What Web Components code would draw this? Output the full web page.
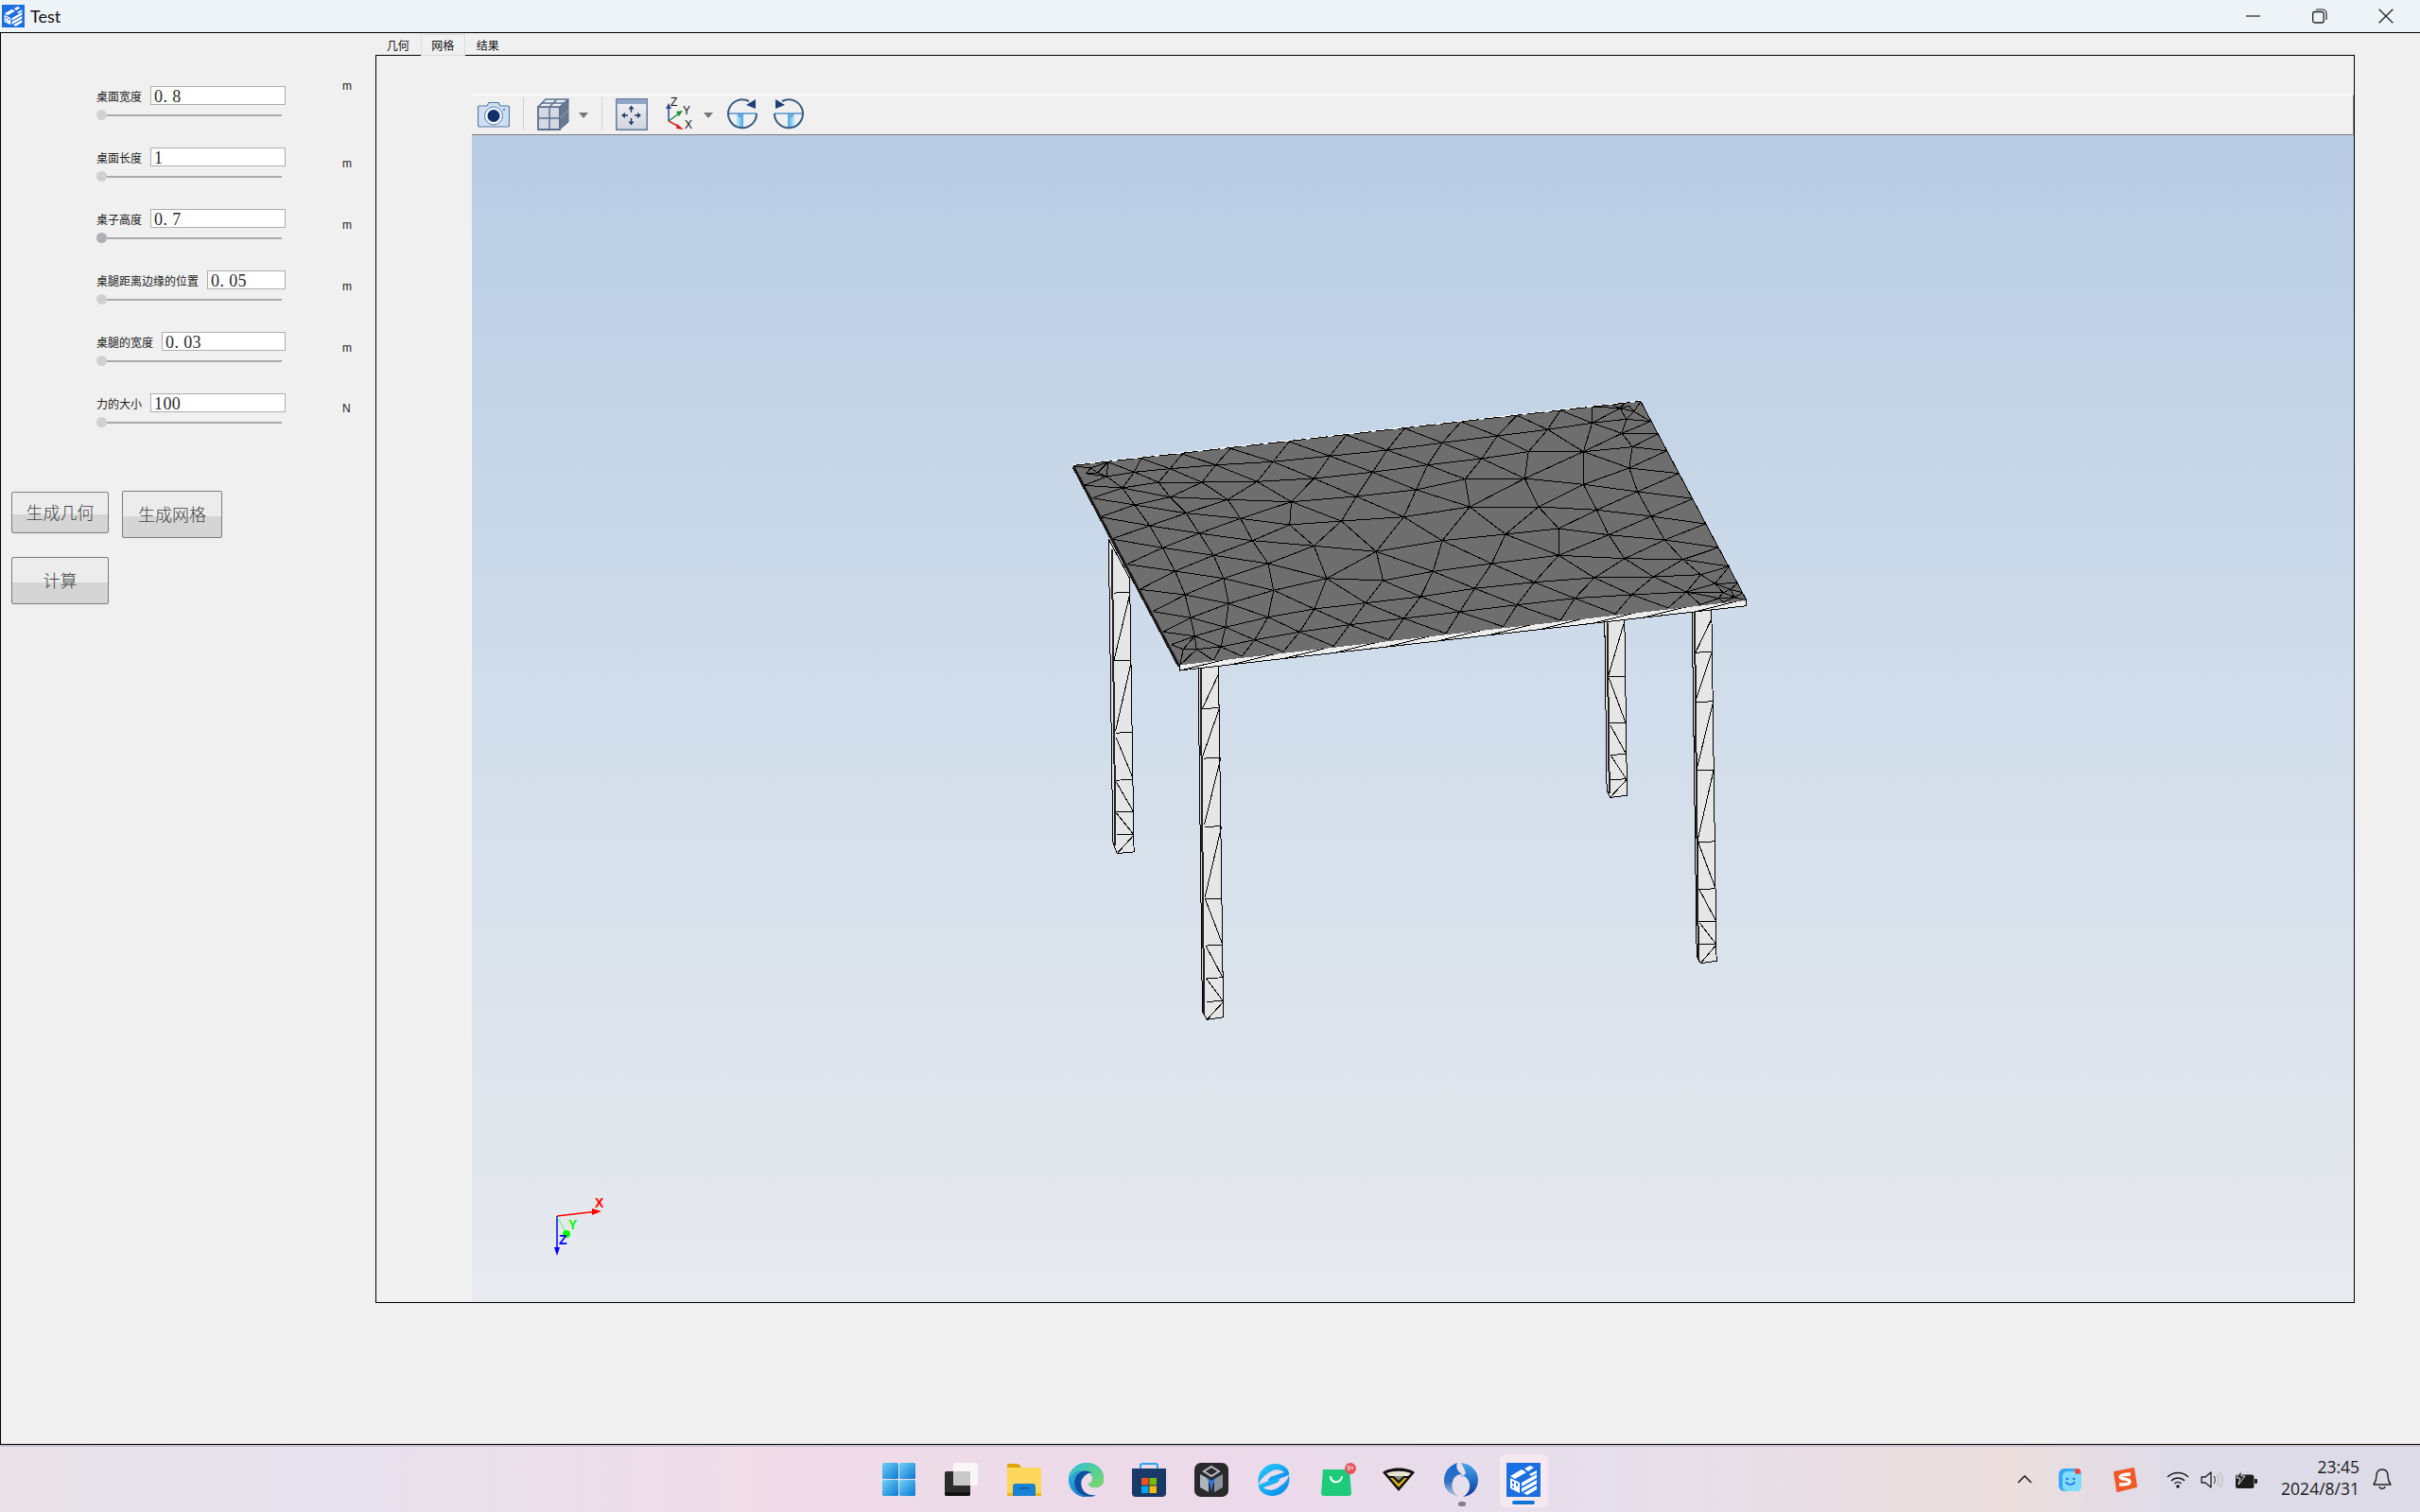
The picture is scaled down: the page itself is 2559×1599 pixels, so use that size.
<!DOCTYPE html>
<html lang="zh">
<head>
<meta charset="utf-8">
<title>Test</title>
<style>
  html, body { margin: 0; padding: 0; }
  body {
    width: 2559px; height: 1599px; overflow: hidden;
    display: flex; flex-direction: column;
    background: #f0f0f0;
    font-family: "Liberation Sans", "Noto Sans CJK SC", sans-serif;
  }
</style>
</head>
<body>
  <win-titlebar>Test</win-titlebar>

  <app-window>
    <param-panel slot="side">
      <param-row label="桌面宽度" value="0. 8" unit="m" unit-top="-10"></param-row>
      <param-row label="桌面长度" value="1" unit="m" unit-top="7"></param-row>
      <param-row label="桌子高度" value="0. 7" unit="m" unit-top="7" active></param-row>
      <param-row label="桌腿距离边缘的位置" value="0. 05" unit="m" unit-top="7"></param-row>
      <param-row label="桌腿的宽度" value="0. 03" unit="m" unit-top="7"></param-row>
      <param-row label="力的大小" value="100" unit="N" unit-top="6"></param-row>
      <div slot="actions" style="display:flex;align-items:flex-start;gap:14px">
        <tool-button w="103" h="44" split="23" style="margin-top:1px">生成几何</tool-button>
        <tool-button w="106" h="50" split="26">生成网格</tool-button>
      </div>
      <tool-button slot="actions" w="103" h="50" split="26">计算</tool-button>
    </param-panel>

    <tab-panel slot="main" tabs="几何,网格,结果" current="1">
      <view-toolbar></view-toolbar>
      <mesh-view></mesh-view>
    </tab-panel>
  </app-window>

  <task-bar></task-bar>

<script>
// ---- icones partagees -------------------------------------------------
const ICONS = {
  logo: `<svg viewBox="0 0 36 36" width="100%" height="100%"><rect width="36" height="36" fill="#1b6fe0"/>
    <g fill="#fff"><path d="M4 14 16 7l5 3-12 7z"/><path d="M19 6l6-3 4 2-6 4z"/>
    <path d="M4 16l10 5v11L4 27z"/><path d="M16 21l16-9v4L16 25z"/><path d="M16 27l16-9v4L16 31z"/><path d="M18 32l14-8v4l-10 6z"/><path d="M24 12l8-4v3l-6 3z"/></g>
    <g fill="#1b6fe0"><path d="M6 19l2 1v3l-2-1z"/><path d="M10 21l2 1v3l-2-1z"/><path d="M6 24l2 1v2l-2-1z"/></g></svg>`,
  win: `<svg viewBox="0 0 35 35" width="35" height="35"><defs><linearGradient id="w" x1="0" y1="0" x2="1" y2="1"><stop offset="0" stop-color="#6fd2f6"/><stop offset="1" stop-color="#0b78d3"/></linearGradient></defs>
    <g fill="url(#w)"><rect width="17" height="17" rx="1.5"/><rect x="18" width="17" height="17" rx="1.5"/><rect y="18" width="17" height="17" rx="1.5"/><rect x="18" y="18" width="17" height="17" rx="1.5"/></g></svg>`,
  task: `<svg viewBox="0 0 36 36" width="36" height="36"><rect x="0" y="9" width="27" height="26" rx="2" fill="#2d2d2d"/><rect x="0" y="31" width="27" height="4" rx="2" fill="#111"/>
    <rect x="9" y="0" width="26" height="24" rx="2" fill="#fafafa" fill-opacity=".85"/><rect x="9" y="9" width="18" height="15" fill="#c9c9c9"/></svg>`,
  folder: `<svg viewBox="0 0 36 34" width="36" height="34"><path d="M0 2a2 2 0 0 1 2-2h10l3 4h-15z" fill="#e0a408"/><path d="M0 4h34a2 2 0 0 1 2 2v28H0z" fill="#ffd75c"/><path d="M0 31h36v3H0z" fill="#f4b50e"/>
    <path d="M6 34V24a3 3 0 0 1 3-3h18a3 3 0 0 1 3 3v10z" fill="#1a82d0"/><rect x="13" y="25" width="10" height="1.6" fill="#0b5ea6"/></svg>`,
  edge: `<svg viewBox="0 0 38 36" width="38" height="36"><defs><linearGradient id="e1" x1="0" y1="0" x2=".9" y2="1"><stop offset="0" stop-color="#33c6dc"/><stop offset=".6" stop-color="#1b86d4"/><stop offset="1" stop-color="#0f5fb2"/></linearGradient><linearGradient id="e2" x1="0" y1="0" x2="1" y2="1"><stop offset="0" stop-color="#2dc0d8"/><stop offset="1" stop-color="#7edb5e"/></linearGradient></defs>
    <path d="M19 0C30 0 38 8 37 18c0 5-4 8-9 8-4 0-7-2-7-4 3-1 5-3 4-7C23 9 17 7 12 10 5 14 4 25 10 31c5 5 13 6 19 3-6 4-15 3-21-1C2 29-1 22 0 15 2 6 10 0 19 0z" fill="url(#e1)"/>
    <path d="M19 0C30 0 38 8 37 18c0 5-4 8-9 8-4 0-7-2-7-4 3-1 5-3 4-7-1-4-6-7-11-7C8 8 3 12 1 17 2 7 10 0 19 0z" fill="url(#e2)"/>
    <path d="M12 10C5 14 4 25 10 31c5 5 13 6 19 3-7 1-13-2-15-8-2-6 0-10 4-13 2-2 5-3 7-2-4-3-9-3-13-1z" fill="#0c4f9e"/></svg>`,
  store: `<svg viewBox="0 0 36 36" width="36" height="36"><path d="M9 8V3a2 2 0 0 1 2-2h14a2 2 0 0 1 2 2v5" fill="none" stroke="#2ba5e8" stroke-width="2"/>
    <path d="M0 6h36v26a4 4 0 0 1-4 4H4a4 4 0 0 1-4-4z" fill="#183a69"/><rect x="10" y="16" width="7.5" height="7.5" fill="#f25022"/><rect x="18.5" y="16" width="7.5" height="7.5" fill="#7fba00"/><rect x="10" y="24.5" width="7.5" height="7.5" fill="#00a4ef"/><rect x="18.5" y="24.5" width="7.5" height="7.5" fill="#ffb900"/></svg>`,
  hub: `<svg viewBox="0 0 36 36" width="36" height="36"><rect width="36" height="36" rx="7" fill="#2a2a2c"/><path d="M18 4l8 5-8 5-8-5z" fill="none" stroke="#b9bec6" stroke-width="2"/><path d="M6 12l9 5v14l-9-5z" fill="#aeb4bd"/><path d="M30 12l-9 5v14l9-5z" fill="#8d939c"/><path d="M12 15l6 4 6-4-4 6-2 9-2-9z" fill="#2f7be8"/></svg>`,
  swirl: `<svg viewBox="0 0 34 34" width="34" height="34"><defs><linearGradient id="s" x1="0" y1="0" x2="1" y2="1"><stop offset="0" stop-color="#25d2fa"/><stop offset="1" stop-color="#0a7fe6"/></linearGradient></defs>
    <path d="M20 0c9 1 14 7 13 12L11 20c-1-3 1-6 5-7l12-4c-3-3-9-4-14-1C7 12 2 17 1 22-2 10 8-1 20 0z" fill="url(#s)"/><path d="M14 34C5 33 0 27 1 22l22-8c1 3-1 6-5 7L6 25c3 3 9 4 14 1 7-4 12-9 13-14 3 12-7 23-19 22z" fill="url(#s)"/></svg>`,
  bag: `<svg viewBox="0 0 32 31" width="32" height="31"><path d="M2 3h28l2 25c0 2-1 3-3 3H3c-2 0-3-1-3-3z" fill="#1fcb7b"/><path d="M10 11c1 7 10 7 12 0" fill="none" stroke="#fff" stroke-width="2" stroke-linecap="round"/></svg>`,
  shield: `<svg viewBox="0 0 34 25" width="34" height="25"><path d="M0 5C8-1 26-1 34 5L17 25z" fill="#111"/><path d="M4 6c8-3 18-3 26 0l-3 3H7z" fill="#e8e4d4"/><path d="M8 11l9 10 9-10-3 0-6 6-6-6z" fill="#d9b21c"/><path d="M12 9l5 5 5-5z" fill="#8d8d80"/></svg>`,
  orbit: `<svg viewBox="0 0 36 36" width="36" height="36"><defs><linearGradient id="oL" x1="0" y1="0" x2="0" y2="1"><stop offset="0" stop-color="#1668d0"/><stop offset=".55" stop-color="#2f6fc4"/><stop offset="1" stop-color="#c3ccd6"/></linearGradient><linearGradient id="oR" x1="0" y1="0" x2="0" y2="1"><stop offset="0" stop-color="#45a8ea"/><stop offset="1" stop-color="#0a389f"/></linearGradient></defs>
    <path d="M14 0C5 3 0 10 0 19c0 9 6 15 16 17-6-4-9-10-7-16 1-5 5-8 10-8-5-3-7-8-5-12z" fill="url(#oL)"/>
    <path d="M18 0c10 1 18 8 18 18 0 10-7 17-16 18 5-3 8-8 7-14-1-5-5-8-10-8 5-1 7-2 5-6-1-3-3-6-4-8z" fill="url(#oR)"/>
    <path d="M17 13c5 0 9 4 9 9 0 5-4 8-8 8-4-2-5-7-3-10 2 4 7 3 7-1 0-3-3-6-5-6z" fill="#dfe5ec"/></svg>`,
  chevron: `<svg viewBox="0 0 16 9" width="16" height="9"><path d="M1 8l7-7 7 7" fill="none" stroke="#222" stroke-width="1.6"/></svg>`,
  smile: `<svg viewBox="0 0 24 24" width="24" height="24"><rect width="24" height="24" rx="6" fill="#36a6f7"/><rect x="4" y="3" width="20" height="21" rx="5" fill="#7fdcfa"/><circle cx="9" cy="11" r="1.3" fill="#1e6fe8"/><circle cx="16" cy="11" r="1.3" fill="#1e6fe8"/><path d="M7.5 14c1.500 4 8 4 9.500 0" fill="none" stroke="#1e6fe8" stroke-width="1.600"/><circle cx="20" cy="3" r="3" fill="#f2453d"/></svg>`,
  sogou: `<svg viewBox="0 0 26 26" width="26" height="26"><path d="M2 5l20-4 3 19-20 5z" fill="#f0582a" stroke="#f0582a" stroke-linejoin="round" stroke-width="2"/><path d="M19 7c-4 0-10 0-11 3 0 3 10 1 10 5 0 3-6 3-11 3" fill="none" stroke="#fff" stroke-width="3.400"/></svg>`,
  wifi: `<svg viewBox="0 0 24 18" width="24" height="18"><g fill="none" stroke="#1c1c1c" stroke-width="1.500"><path d="M1 6c6-6 16-6 22 0"/><path d="M5 10c4-4 10-4 14 0"/><path d="M8.500 13c2-2 5-2 7 0"/></g><circle cx="12" cy="16" r="1.800" fill="#1c1c1c"/></svg>`,
  volume: `<svg viewBox="0 0 24 20" width="24" height="20"><path d="M1 7h4l6-5v16l-6-5H1z" fill="none" stroke="#1c1c1c" stroke-width="1.300" stroke-linejoin="round"/><path d="M14 6c2 2 2 6 0 8" fill="none" stroke="#555" stroke-width="1.200"/><path d="M17 4c3 3 3 9 0 12M20 2c4 4 4 12 0 16" fill="none" stroke="#b8b8c0" stroke-width="1.200"/></svg>`,
  battery: `<svg viewBox="0 0 24 20" width="24" height="20"><rect x="1" y="4.500" width="19.500" height="14.500" rx="2.500" fill="#1c1c1c"/><rect x="21" y="9" width="3" height="5" rx="1" fill="#1c1c1c"/><path d="M7 0L2 8h4l-2 7 7-9H7z" fill="#1c1c1c" stroke="#e4e0ea" stroke-width="1"/></svg>`,
  bell: `<svg viewBox="0 0 20 23" width="20" height="23"><path d="M10 1c-4 0-6 3-6 7 0 4-1 6-3 9h18c-2-3-3-5-3-9 0-4-2-7-6-7zM7 19c.5 3 5.500 3 6 0" fill="none" stroke="#222" stroke-width="1.400" stroke-linejoin="round"/></svg>`
};

// ---- barre de titre ---------------------------------------------------
class WinTitlebar extends HTMLElement {
  connectedCallback() {
    this.attachShadow({ mode: 'open' }).innerHTML = `
      <style>
        :host { display: flex; align-items: center; height: 34px; flex: none; background: #eef3f8; color: #111;
                font: 18px Lato, "Open Sans", sans-serif; }
        .logo { width: 24px; height: 24px; margin: 0 6px 0 2px; }
        .fill { flex: 1; }
        .ctl { width: 70px; height: 34px; display: flex; align-items: center; justify-content: center; }
        .ctl:last-child { margin-right: 1px; }
      </style>
      <div class="logo">${ICONS.logo}</div><slot></slot><div class="fill"></div>
      <div class="ctl"><svg width="16" height="16"><path d="M0 8h15" stroke="#222" stroke-width="1.200"/></svg></div>
      <div class="ctl"><svg width="16" height="16"><rect x=".7" y="3.500" width="11.500" height="11.500" rx="2" fill="none" stroke="#222" stroke-width="1.300"/><path d="M4 1h7a4 4 0 0 1 4 4v7" fill="none" stroke="#222" stroke-width="1.200"/></svg></div>
      <div class="ctl"><svg width="16" height="16"><path d="M.7.700l14.600 14.600M15.300.700L.7 15.300" stroke="#222" stroke-width="1.300"/></svg></div>`;
  }
}
customElements.define('win-titlebar', WinTitlebar);

// ---- fenetre : colonne de gauche + onglets ----------------------------
class AppWindow extends HTMLElement {
  connectedCallback() {
    this.attachShadow({ mode: 'open' }).innerHTML = `
      <style>
        :host { display: flex; flex: 1; min-height: 0; background: #f0f0f0;
                border-top: 1px solid #000; border-bottom: 1px solid #000; border-left: 1px solid #000; }
        .side { width: 396px; flex: none; }
      </style>
      <div class="side"><slot name="side"></slot></div>
      <div><slot name="main"></slot></div>`;
  }
}
customElements.define('app-window', AppWindow);

class ParamPanel extends HTMLElement {
  connectedCallback() {
    this.attachShadow({ mode: 'open' }).innerHTML = `
      <style>
        :host { display: block; padding-top: 56px; }
        .actions { display: flex; flex-direction: column; gap: 20px; padding: 38px 0 0 11px; }
      </style>
      <slot></slot>
      <div class="actions"><slot name="actions"></slot></div>`;
  }
}
customElements.define('param-panel', ParamPanel);

// Une ligne de parametre : libelle, valeur, curseur, unite
class ParamRow extends HTMLElement {
  connectedCallback() {
    const label = this.getAttribute('label');
    const value = this.getAttribute('value');
    const unit  = this.getAttribute('unit');
    const top   = this.getAttribute('unit-top') || 0;
    const knob  = this.hasAttribute('active') ? '#aeb0b3' : '#d0d0d0';
    this.attachShadow({ mode: 'open' }).innerHTML = `
      <style>
        :host { display: flex; align-items: flex-start; height: 65px; padding-left: 101px; }
        .form { width: 200px; flex: none; }
        .top { display: flex; align-items: center; gap: 9px; height: 20px; }
        label { font: 12px "Noto Sans CJK SC", sans-serif; color: #222; white-space: nowrap; }
        .val { flex: 1; height: 18px; box-sizing: content-box; background: #fff; border: 1px solid #adadad;
               font: 18px/20px "Liberation Serif", serif; letter-spacing: .4px; color: #2a2a2a; padding-left: 3px; white-space: pre; overflow: hidden; }
        .slider { display: flex; align-items: center; height: 11px; margin-top: 5px; width: 196px; }
        .knob { width: 11px; height: 11px; border-radius: 50%; background: ${knob}; flex: none; }
        .track { flex: 1; height: 2px; background: #a9a9a9; }
        .unit { margin: ${top}px 0 0 60px; font: 12px/20px "Liberation Sans", sans-serif; color: #222; }
      </style>
      <div class="form">
        <div class="top"><label>${label}</label><div class="val">${value}</div></div>
        <div class="slider"><div class="knob"></div><div class="track"></div></div>
      </div>
      <div class="unit">${unit}</div>`;
  }
}
customElements.define('param-row', ParamRow);

class ToolButton extends HTMLElement {
  connectedCallback() {
    const w = this.getAttribute('w'), h = this.getAttribute('h'), s = this.getAttribute('split');
    this.attachShadow({ mode: 'open' }).innerHTML = `
      <style>
        :host { display: flex; align-items: center; justify-content: center; box-sizing: border-box;
                width: ${w}px; height: ${h}px; padding-bottom: 3px; border: 1px solid #7c7c7c; border-radius: 2px;
                background: linear-gradient(#ececec ${s}px, #d5d5d5 ${s}px);
                font: 300 18px "Noto Sans CJK SC", sans-serif; color: #444; }
      </style><slot></slot>`;
  }
}
customElements.define('tool-button', ToolButton);

// ---- onglets ----------------------------------------------------------
class TabPanel extends HTMLElement {
  connectedCallback() {
    const tabs = this.getAttribute('tabs').split(',');
    const cur  = +this.getAttribute('current');
    this.attachShadow({ mode: 'open' }).innerHTML = `
      <style>
        :host { display: block; padding-top: 1px; }
        .tabs { display: flex; height: 22px; }
        .tab { position: relative; z-index: 1; width: 47.500px; box-sizing: border-box; height: 23px; text-align: center;
               font: 12px/24px "Noto Sans CJK SC", sans-serif; color: #111; }
        .tab.on { background: #f0f0f0; border: 1px solid #dcdcdc; line-height: 22px; }
        .pane { box-sizing: border-box; width: 2093px; height: 1320px; border: 1px solid #000; background: #f0f0f0;
                padding: 41px 0 0 101px; display: flex; flex-direction: column; }
      </style>
      <div class="tabs">${tabs.map((t, i) => `<div class="tab ${i === cur ? 'on' : ''}">${t}</div>`).join('')}</div>
      <div class="pane"><slot></slot></div>`;
  }
}
customElements.define('tab-panel', TabPanel);

// ---- barre d'outils de la vue 3D --------------------------------------
class ViewToolbar extends HTMLElement {
  connectedCallback() {
    const drop = `<svg width="10" height="6" style="margin-top:2px"><path d="M0 0h10L5 6z" fill="#777"/></svg>`;
    const sep = `<i class="sep"></i>`;
    const rot = flip => `<svg width="33" height="33" viewBox="0 0 33 33" style="${flip ? 'transform:scaleX(-1)' : ''}">
        <defs><linearGradient id="q${flip}" x1="0" x2="1"><stop offset="0" stop-color="#f2fbff"/><stop offset="1" stop-color="#3fa9e2"/></linearGradient></defs>
        <path d="M8 16h9v15c-4 0-7-2-9-5z" fill="url(#q${flip})"/><path d="M12 16v3h3" fill="none" stroke="#4a7fb0"/>
        <path d="M1 16h30" stroke="#2b7cc0" stroke-width="1.200"/>
        <path d="M23 3A15 15 0 1 0 31 16" fill="none" stroke="#3c5a80" stroke-width="2"/>
        <path d="M20 7L30 1v10z" fill="#1e3f78"/></svg>`;
    this.attachShadow({ mode: 'open' }).innerHTML = `
      <style>
        :host { display: flex; align-items: center; flex: none; box-sizing: border-box; height: 43px; padding: 0 0 2px 6px;
                background: #f0f0f0; border-top: 1px solid #fff; border-bottom: 1px solid #7d7d7d; border-right: 1px solid #8a8a8a; }
        .sep { width: 1px; height: 35px; background: #d0d0d0; margin: 0 14px; }
        svg { display: block; flex: none; }
      </style>
      <svg width="34" height="28" viewBox="0 0 34 28"><path d="M2 5h8l2-3.500h10l2 3.500h8a1.500 1.500 0 0 1 1.500 1.500v19A1.500 1.500 0 0 1 32 27H2a1.500 1.500 0 0 1-1.500-1.500v-19A1.500 1.500 0 0 1 2 5z" fill="#cfe0f4" stroke="#56779d" stroke-width="1.200"/><circle cx="17" cy="15.500" r="9.500" fill="#eef5fc" stroke="#5d7da3"/><circle cx="17" cy="15.500" r="6.500" fill="#13306b"/><circle cx="28" cy="9" r="1.200" fill="#6d8cb0"/></svg>
      ${sep}
      <svg width="34" height="34" viewBox="0 0 34 34"><path d="M1 9h23v24H1z" fill="#d3d8e1" stroke="#5b6f8e" stroke-width="1.800"/><path d="M1 9l8-8h24l-9 8z" fill="#eceff4" stroke="#5b6f8e" stroke-width="1.600" stroke-linejoin="round"/><path d="M24 9l9-8v24l-9 8z" fill="#67788f" stroke="#5b6f8e"/><path d="M13 9v24M1 21h23M13 9l8-8M5 5h24" fill="none" stroke="#5b6f8e" stroke-width="1.500"/><path d="M24 21l9-8" stroke="#9aa7b8"/></svg>
      <div style="width:10px;margin-left:10px">${drop}</div>
      ${sep}
      <svg width="34" height="34" viewBox="0 0 34 34"><defs><linearGradient id="f" x1="0" x2="0" y1="0" y2="1"><stop offset="0" stop-color="#f1f3f7"/><stop offset="1" stop-color="#cfd4de"/></linearGradient></defs><rect x=".8" y=".8" width="32.400" height="32.400" fill="url(#f)" stroke="#5a7092" stroke-width="1.400"/><rect x="1" y="1" width="32" height="5" fill="#8fa6c6"/><path d="M16.500 10v5M16.500 21v5M8 18h5M20 18h5" stroke="#2a3c5c" stroke-width="1.400"/><path d="M16.500 7.500l-3 4h6zM16.500 28.500l-3-4h6zM6 18l4-3v6zM27 18l-4-3v6z" fill="#2a3c5c"/></svg>
      <svg width="40" height="36" viewBox="0 0 40 36" style="margin-left:15px;margin-right:-4px;overflow:visible"><path d="M7 25V10" stroke="#27479a" stroke-width="1.500"/><path d="M7 6l-3 6h6z" fill="#27479a"/><path d="M7 25L18 17" stroke="#1f8a3c" stroke-width="1.500"/><path d="M22 14l-7 1 3 5z" fill="#1f8a3c"/><path d="M7 25l11 6" stroke="#d6232a" stroke-width="1.500"/><path d="M23 34l-7-6-1 5z" fill="#d6232a"/><text x="9" y="9" font-size="12" font-family="Liberation Sans" fill="#111">Z</text><text x="22" y="18" font-size="12" font-family="Liberation Sans" fill="#111">Y</text><text x="24" y="33" font-size="12" font-family="Liberation Sans" fill="#111">X</text></svg>
      <div style="width:10px;margin-left:8px">${drop}</div>
      <div style="margin-left:15px">${rot(0)}</div>
      <div style="margin-left:15px">${rot(1)}</div>`;
  }
}
customElements.define('view-toolbar', ViewToolbar);

// ---- maillage du plateau : sommets releves, triangulation de Delaunay ----
const TOP_NODES = [
  // contour
  [72,248],[1310,44],[1541,675],[305,880],
  [148,236],[220,224],[310,210],[415,193],[543,171],[668,150],[795,129],[918,108],[1040,88],[1135,72],[1204,60],[1245,53],[1275,49],
  [1331,107],[1347,147],[1367,200],[1393,272],[1424,352],[1451,432],[1480,507],[1503,567],[1522,620],[1533,650],
  [84,282],[96,310],[114,350],[131,410],[155,480],[189,560],[217,640],[246,710],[268,775],[286,815],
  [378,865],[440,852],[530,838],[640,820],[760,800],[885,780],[1010,758],[1135,738],[1255,718],[1370,698],[1440,688],[1490,680],
  // interieur
  [205,268],[283,257],[383,245],[508,235],[632,217],[757,198],[877,175],[997,153],[1107,133],[1204,112],[1269,145],[1292,188],
  [145,282],[258,300],[353,300],[473,298],[597,288],[725,268],[845,245],[963,225],[1065,203],[1185,203],[1285,255],
  [179,318],[283,347],[409,355],[548,362],[690,345],[820,324],[927,290],[1057,288],[1185,307],[1303,330],
  [206,372],[318,398],[437,415],[544,435],[657,423],[793,410],[937,378],[1087,378],[1214,388],[1333,408],
  [239,438],[347,462],[463,485],[597,502],[733,520],[877,485],[1015,465],[1131,447],[1240,467],[1362,483],
  [267,508],[378,532],[497,558],[625,605],[748,612],[857,583],[985,558],[1131,532],[1275,542],[1402,545],
  [294,582],[400,605],[509,643],[830,663],[948,637],[1078,617],[1209,603],[1338,600],[1441,593],
  [316,657],[411,685],[598,702],[710,683],[1040,689],[1166,668],[1290,657],[1410,648],
  [328,730],[404,760],[497,728],[675,752],[793,732],[915,711],
  [337,788],[468,800],[566,775],[394,822],[341,830],[312,830],
  // petits groupes dans les coins
  [110,255],[125,270],[100,272],
  [1265,65],[1285,58],[1295,75],[1279,100],
  [1472,622],[1490,650],[1505,640],[1480,668],[1515,665]
];

function delaunay(pts) {
  const all = pts.concat([[-50, -50], [50, -50], [0, 50]]);
  const n = pts.length;
  let tris = [[n, n + 1, n + 2]];
  const inCircle = (t, p) => {
    const [ax, ay] = all[t[0]], [bx, by] = all[t[1]], [cx, cy] = all[t[2]];
    const d = 2 * (ax * (by - cy) + bx * (cy - ay) + cx * (ay - by));
    const ux = ((ax*ax + ay*ay) * (by - cy) + (bx*bx + by*by) * (cy - ay) + (cx*cx + cy*cy) * (ay - by)) / d;
    const uy = ((ax*ax + ay*ay) * (cx - bx) + (bx*bx + by*by) * (ax - cx) + (cx*cx + cy*cy) * (bx - ax)) / d;
    return (p[0]-ux)**2 + (p[1]-uy)**2 < (ax-ux)**2 + (ay-uy)**2;
  };
  pts.forEach((p, i) => {
    const bad = tris.filter(t => inCircle(t, p));
    const count = {};
    bad.forEach(t => [[t[0],t[1]],[t[1],t[2]],[t[2],t[0]]].forEach(([a, b]) => {
      const k = a < b ? a + '_' + b : b + '_' + a;
      count[k] = (count[k] || 0) + 1;
    }));
    tris = tris.filter(t => !bad.includes(t));
    Object.keys(count).filter(k => count[k] === 1).forEach(k => {
      const [a, b] = k.split('_').map(Number);
      tris.push([a, b, i]);
    });
  });
  const edges = new Set();
  tris.filter(t => t.every(v => v < n)).forEach(t =>
    [[t[0],t[1]],[t[1],t[2]],[t[2],t[0]]].forEach(([a, b]) => edges.add(a < b ? a + '_' + b : b + '_' + a)));
  return [...edges].map(k => k.split('_').map(Number));
}

// Pieds : contour + traverses + diagonales, en coordonnees du releve
const LEGS = [
  { out: [[50,30],[100,150],[110,990],[70,995],[60,960]], inner: [[58,60],[66,970]],
    h: [[62,195,102],[63,403,103],[66,625,105],[66,770,108],[68,868,108],[70,938,110]],
    d: [[100,200,63,400],[103,410,66,620],[68,640,108,765],[68,775,108,865],[68,870,110,938],[110,938,70,995]] },
  { out: [[262,420],[310,415],[322,1498],[283,1505],[272,1480]], inner: [[268,425],[276,1490]],
    h: [[272,550,312],[275,703,315],[277,913,317],[279,1135,319],[280,1278,320],[282,1378,322],[282,1450,322]],
    d: [[310,445,272,550],[312,550,273,695],[315,703,277,905],[317,913,278,1130],[279,1135,320,1275],[281,1280,320,1375],[282,1380,322,1450],[322,1450,283,1505]] },
  { out: [[1225,280],[1272,270],[1278,817],[1238,823],[1230,800]], inner: [[1231,282],[1236,810]],
    h: [[1235,453,1274],[1237,595,1276],[1238,692,1277],[1238,768,1277]],
    d: [[1270,290,1233,453],[1235,455,1275,595],[1238,600,1277,692],[1240,695,1277,768],[1277,768,1238,823]] },
  { out: [[1432,250],[1478,245],[1490,1325],[1452,1332],[1443,1310]], inner: [[1438,252],[1447,1320]],
    h: [[1440,378,1478],[1441,530,1480],[1443,740,1483],[1445,960,1485],[1447,1105,1487],[1448,1205,1488],[1450,1275,1490]],
    d: [[1478,275,1440,378],[1478,380,1442,520],[1482,530,1443,735],[1483,740,1445,955],[1447,962,1487,1100],[1449,1105,1488,1200],[1450,1208,1490,1275],[1490,1275,1452,1332]] }
];

class MeshView extends HTMLElement {
  connectedCallback() {
    const z4 = (X, Y) => [1100 + X * 0.4847, 410 + Y / 3];
    const z5 = (X, Y) => [1150 + X * 0.4464, 560 + Y / 2.904];
    const line = (a, b, w = 1, c = '#000') => `<path d="M${a[0].toFixed(1)} ${a[1].toFixed(1)}L${b[0].toFixed(1)} ${b[1].toFixed(1)}" stroke="${c}" stroke-width="${w}"/>`;
    const poly = p => p.map(q => q[0].toFixed(1) + ',' + q[1].toFixed(1)).join(' ');

    // pieds
    let legs = '';
    LEGS.forEach(l => {
      const o = l.out.map(p => z5(p[0], p[1]));
      legs += `<polygon points="${poly(o)}" fill="#e6e6e6" stroke="#000"/>`;
      legs += line(z5(...l.inner[0]), z5(...l.inner[1]), 2, '#222');
      l.h.forEach(h => legs += line(z5(h[0], h[1]), z5(h[2], h[1] - 2)));
      l.d.forEach(d => legs += line(z5(d[0], d[1]), z5(d[2], d[3])));
    });

    // plateau : on triangule dans le plan de la table (1 x 0.8)
    const A = [72, 248], e1 = [1238, -204], e2 = [233, 632];
    const det = e1[0] * e2[1] - e1[1] * e2[0];
    const plane = TOP_NODES.map(([x, y]) => {
      const dx = x - A[0], dy = y - A[1];
      return [(dx * e2[1] - dy * e2[0]) / det, 0.8 * (e1[0] * dy - e1[1] * dx) / det];
    });
    // une arete dont les deux bouts sont sur le meme bord ferait une lame : on l'ignore
    const sides = p => [p[1] < .012, p[1] > .788, p[0] < .015, p[0] > .985];
    const onSameSide = (a, b) => { const s = sides(a), t = sides(b); return s.some((v, i) => v && t[i]); };
    let wire = '';
    delaunay(plane).forEach(([a, b]) => {
      if (!onSameSide(plane[a], plane[b])) wire += line(z4(...TOP_NODES[a]), z4(...TOP_NODES[b]));
    });

    const top = [[72,248],[1310,44],[1541,675],[305,880]].map(p => z4(p[0], p[1]));
    // la tranche avant, plus large que sur le releve initial pour laisser voir le blanc
    const strip = [[305,876],[1541,670],[1541,692],[305,897]].map(p => z4(p[0], p[1]));
    let zig = '';
    const ZIG = 11;
    for (let i = 0; i < ZIG; i++) {
      const up = X => [X, 876 - (X - 305) * 0.1668], lo = X => [X, 897 - (X - 305) * 0.1658];
      const X0 = 305 + 1236 * i / ZIG, X1 = 305 + 1236 * (i + 1) / ZIG;
      zig += line(z4(...up(X1)), z4(...lo(X0)));
    }

    this.attachShadow({ mode: 'open' }).innerHTML = `
      <style>
        :host { display: block; flex: 1; position: relative; overflow: hidden;
                background: linear-gradient(#b8cce4, #cfdcea 45%, #e8eaee); }
        svg { position: absolute; left: 0; top: 0; }
        text { font-family: "Liberation Sans", sans-serif; font-weight: bold; font-size: 14px; }
      </style>
      <svg width="1989" height="1234" viewBox="499 143 1989 1234" shape-rendering="crispEdges">
        ${legs}
        <polygon points="${poly(strip)}" fill="#eeeeee" stroke="#000"/>
        ${zig}
        <polygon points="${poly(top)}" fill="#6e6e6e"/>
        ${wire}
        ${line(z4(72,245), z4(1310,41), 1, '#fff')}
        <path d="M${z4(72,247).join(' ')}L${z4(1310,43).join(' ')}" stroke="#000" stroke-width="1" stroke-dasharray="18 5"/>
        ${line(z4(72,250), z4(303,884), 3, '#1a1a1a')}
        ${line(z4(1310,44), z4(1541,675), 1)}
      </svg>
      <svg width="1989" height="1234" viewBox="499 143 1989 1234">
        <path d="M589 1286L632 1281" stroke="#f00" stroke-width="1.500"/>
        <path d="M626 1278l10 3-10 4z" fill="#f00"/>
        <path d="M589 1286v38" stroke="#00f" stroke-width="1.500"/>
        <path d="M586 1319h6l-3 9z" fill="#00f"/>
        <path d="M589 1287l10 17" stroke="#0f0" stroke-width="1" stroke-dasharray="2 1"/>
        <circle cx="599" cy="1305" r="4" fill="#0f0"/>
        <text x="629" y="1277" fill="#f00">X</text>
        <text x="601" y="1300" fill="#0f0">Y</text>
        <text x="591" y="1316" fill="#00f">Z</text>
      </svg>`;
  }
}
customElements.define('mesh-view', MeshView);

// ---- barre des taches -------------------------------------------------
class TaskBar extends HTMLElement {
  connectedCallback() {
    const apps = ['win','task','folder','edge','store','hub','swirl','bag','shield','orbit'];
    const cell = a => `<div class="cell">${a === 'bag' ? `<div class="bag">${ICONS.bag}<span class="badge">9+</span></div>` : ICONS[a]}${a === 'orbit' ? '<i class="dot"></i>' : ''}</div>`;
    this.attachShadow({ mode: 'open' }).innerHTML = `
      <style>
        :host { display: block; position: relative; flex: none; height: 71px; box-sizing: border-box; border-top: 2px solid #c8c0cc;
                background: linear-gradient(90deg, #e9e3e8 0, #e6e2ee 340px, #f0dde8 800px, #ecd9e9 1280px, #e6dfec 1700px, #ecdedd 2130px, #dedbe9 2300px, #dcdbe6 2559px);
                font-family: "Open Sans", "Noto Sans", sans-serif; color: #1a1a1a; }
        .apps { display: flex; justify-content: center; height: 69px; margin-left: 3px; }
        .cell { width: 66.100px; height: 69px; display: flex; align-items: center; justify-content: center; position: relative; }
        .dot { position: absolute; left: 30px; bottom: 6px; width: 8px; height: 5px; border-radius: 3px; background: #80808a; }
        .bag { position: relative; width: 32px; height: 31px; margin-top: 3px; }
        .bag svg { display: block; }
        .badge { position: absolute; right: -5px; top: -4px; width: 12px; height: 12px; border-radius: 50%; background: #e5555a; color: #fff; font: 7px/12px "Liberation Sans", sans-serif; text-align: center; }
        .cur { background: #f6e8f1; border-radius: 6px; box-shadow: 3px 0 0 -1px #f0dff0; }
        .bar { position: absolute; left: 13px; bottom: 3px; width: 24px; height: 4px; border-radius: 2px; background: #0f74d6; }
        .cur-wrap { width: 50px; height: 56px; margin-top: 2px; display: flex; align-items: center; justify-content: center; position: relative; }
        .logo { width: 36px; height: 36px; margin-top: -2px; }
        .tray { position: absolute; right: 0; top: 0; height: 69px; display: flex; align-items: center; }
        .tray svg { display: block; }
        .clock { text-align: right; font-size: 17.500px; line-height: 23px; width: 100px; margin: -3px 0 0 8px; }
      </style>
      <div class="apps">${apps.map(cell).join('')}
        <div class="cell"><div class="cur-wrap cur"><div class="logo">${ICONS.logo}</div><i class="bar"></i></div></div>
      </div>
      <div class="tray">
        <div style="margin-right:28px">${ICONS.chevron}</div>
        <div style="margin-right:33px">${ICONS.smile}</div>
        <div style="margin-right:31px">${ICONS.sogou}</div>
        <div style="margin-right:12px">${ICONS.wifi}</div>
        <div style="margin-right:12px">${ICONS.volume}</div>
        <div>${ICONS.battery}</div>
        <div class="clock"><div>23:45</div><div>2024/8/31</div></div>
        <div style="margin:0 30px 0 14px">${ICONS.bell}</div>
      </div>`;
  }
}
customElements.define('task-bar', TaskBar);
</script>
</body>
</html>
